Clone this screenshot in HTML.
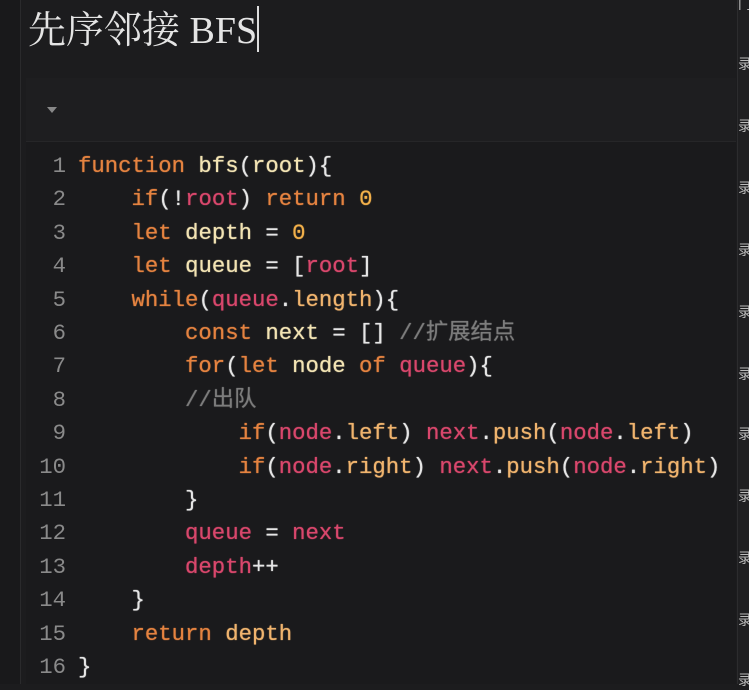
<!DOCTYPE html>
<html><head><meta charset="utf-8"><style>
body{margin:0;width:749px;height:684px;background:#1c1c1e;overflow:hidden;position:relative;font-family:"Liberation Mono",monospace;}
.lstrip{position:absolute;left:0;top:0;width:20px;height:684px;background:#19191b;border-right:1px solid #2a2a2c}
.title{position:absolute;left:28px;top:5px;font-family:"Liberation Serif","Noto Serif CJK SC",serif;font-size:38px;color:#e4e4e4;line-height:52px}
.caret{display:inline-block;width:2px;height:46px;background:#ddd;vertical-align:-9px}
.block{position:absolute;left:26px;top:78px;width:710px;height:606px;background:#1a1a1c}
.hdr{position:absolute;left:26px;top:78px;width:710px;height:63px;background:#1e1e20;border-bottom:1px solid #262628}
.tri{position:absolute;left:47px;top:107px;width:0;height:0;border-left:5px solid transparent;border-right:5px solid transparent;border-top:6px solid #888}
.code{position:absolute;left:0;top:150px;font-size:22.3px;line-height:33.4px;white-space:pre;color:#f3e4b4;text-shadow:0 0 1px currentColor}
.ln{display:inline-block;width:66px;text-align:right;color:#8a8a8a;margin-right:12px;text-shadow:none}
.k{color:#e58340}.r{color:#d9476c}.n{color:#f2b04a}.c{color:#7c7c7c;font-family:"Liberation Mono","Noto Sans CJK SC",monospace}.p{color:#f0b46e}.w{color:#e6e6e6}
.rstrip{position:absolute;left:737px;top:0;width:12px;height:684px;background:#1f1f21;border-left:1px solid #2c2c2e}
.rs{position:absolute;left:738px;font-family:"Noto Sans CJK SC",sans-serif;font-size:14px;color:#bbb}
</style></head><body>
<div class="lstrip"></div>
<div class="block"></div><div class="hdr"></div><div class="tri"></div>
<div class="title">先序邻接 BFS<span class="caret"></span></div>
<div class="code"><span class="ln">1</span><span class="k">function</span> bfs<span class="w">(</span>root<span class="w">){</span>
<span class="ln">2</span>    <span class="k">if</span><span class="w">(!</span><span class="r">root</span><span class="w">)</span> <span class="k">return</span> <span class="n">0</span>
<span class="ln">3</span>    <span class="k">let</span> depth <span class="w">=</span> <span class="n">0</span>
<span class="ln">4</span>    <span class="k">let</span> queue <span class="w">= [</span><span class="r">root</span><span class="w">]</span>
<span class="ln">5</span>    <span class="k">while</span><span class="w">(</span><span class="r">queue</span><span class="w">.</span><span class="p">length</span><span class="w">){</span>
<span class="ln">6</span>        <span class="k">const</span> next <span class="w">= []</span> <span class="c">//扩展结点</span>
<span class="ln">7</span>        <span class="k">for</span><span class="w">(</span><span class="k">let</span> node <span class="k">of</span> <span class="r">queue</span><span class="w">){</span>
<span class="ln">8</span>        <span class="c">//出队</span>
<span class="ln">9</span>            <span class="k">if</span><span class="w">(</span><span class="r">node</span><span class="w">.</span><span class="p">left</span><span class="w">)</span> <span class="r">next</span><span class="w">.</span><span class="p">push</span><span class="w">(</span><span class="r">node</span><span class="w">.</span><span class="p">left</span><span class="w">)</span>
<span class="ln">10</span>            <span class="k">if</span><span class="w">(</span><span class="r">node</span><span class="w">.</span><span class="p">right</span><span class="w">)</span> <span class="r">next</span><span class="w">.</span><span class="p">push</span><span class="w">(</span><span class="r">node</span><span class="w">.</span><span class="p">right</span><span class="w">)</span>
<span class="ln">11</span>        <span class="w">}</span>
<span class="ln">12</span>        <span class="r">queue</span> <span class="w">=</span> <span class="r">next</span>
<span class="ln">13</span>        <span class="r">depth</span><span class="w">++</span>
<span class="ln">14</span>    <span class="w">}</span>
<span class="ln">15</span>    <span class="k">return</span> <span class="p">depth</span>
<span class="ln">16</span><span class="w">}</span></div>
<div class="rstrip"></div>
<div class="rs" style="top:-6px">门</div>
<div class="rs" style="top:54px">录</div>
<div class="rs" style="top:116px">录</div>
<div class="rs" style="top:178px">录</div>
<div class="rs" style="top:240px">录</div>
<div class="rs" style="top:302px">录</div>
<div class="rs" style="top:364px">录</div>
<div class="rs" style="top:424px">录</div>
<div class="rs" style="top:486px">录</div>
<div class="rs" style="top:548px">录</div>
<div class="rs" style="top:610px">录</div>
<div class="rs" style="top:670px">录</div>
</body></html>
